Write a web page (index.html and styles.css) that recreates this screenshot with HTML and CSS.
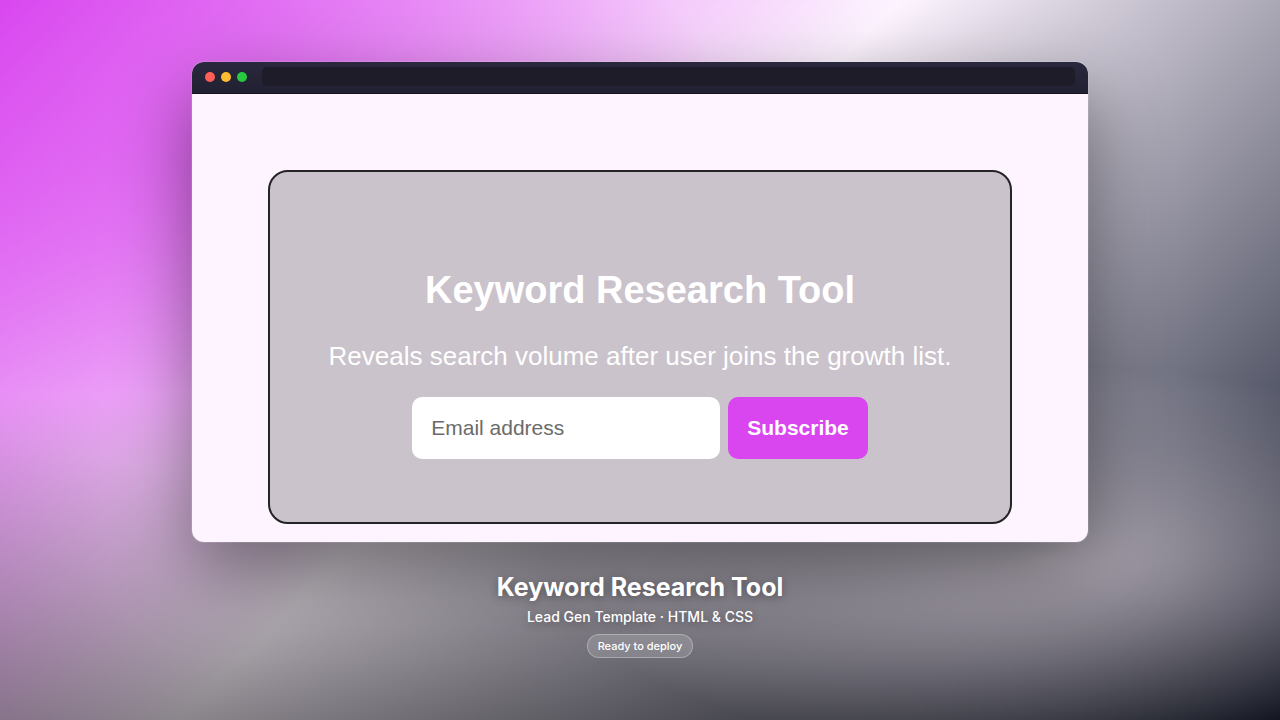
FILE: index.html
```
<!DOCTYPE html>
<html lang="en">
<head>
<meta charset="utf-8">
<meta name="viewport" content="width=device-width, initial-scale=1">
<title>Keyword Research Tool</title>
<link rel="stylesheet" href="styles.css">
</head>
<body>
<main class="stage">
  <section class="browser">
    <header class="browser-bar">
      <span class="dot dot-red"></span>
      <span class="dot dot-yellow"></span>
      <span class="dot dot-green"></span>
      <span class="address"></span>
    </header>
    <div class="page">
      <form class="card">
        <h1 class="card-title">Keyword Research Tool</h1>
        <p class="card-text">Reveals search volume after user joins the growth list.</p>
        <div class="fields">
          <input class="email" type="email" placeholder="Email address" aria-label="Email address">
          <button class="subscribe" type="button">Subscribe</button>
        </div>
      </form>
    </div>
  </section>
  <footer class="caption">
    <h2 class="caption-title">Keyword Research Tool</h2>
    <p class="caption-text">Lead Gen Template · HTML &amp; CSS</p>
    <span class="pill">Ready to deploy</span>
  </footer>
</main>
</body>
</html>
```
FILE: styles.css
```
* {
  box-sizing: border-box;
}

body {
  margin: 0;
}

.stage {
  min-height: 100vh;
  display: flex;
  flex-direction: column;
  align-items: center;
  justify-content: center;
  background:
    radial-gradient(ellipse 500px 196px at 82% 78%, rgba(253, 240, 250, 0.58), transparent),
    linear-gradient(to top, rgba(0, 0, 0, 0.45), transparent 45%),
    radial-gradient(ellipse 500px 300px at 20% 24%, rgba(217, 70, 239, 0.5), transparent),
    linear-gradient(135deg, #d946ef 0%, #fdf4ff 45%, #0f172a 100%);
}

.browser {
  width: 70%;
  border-radius: 12px;
  overflow: hidden;
  background: #fdf4ff;
  box-shadow:
    0 0 0 1px rgba(255, 255, 255, 0.12),
    0 30px 76px rgba(0, 0, 0, 0.45);
}

.browser-bar {
  display: flex;
  align-items: center;
  gap: 6px;
  padding: 5px 13px 7px;
  background: linear-gradient(#29283d, #222132);
  border-bottom: 1px solid #14131f;
}

.dot {
  width: 10px;
  height: 10px;
  border-radius: 50%;
}

.dot-red {
  background: #ff5f57;
}

.dot-yellow {
  background: #febc2e;
}

.dot-green {
  background: #28c840;
}

.address {
  flex: 1;
  height: 19px;
  margin-left: 9px;
  border-radius: 5px;
  background: #1d1c28;
}

.page {
  padding: 76px 76px 18px;
  font-family: "Liberation Sans", Arial, sans-serif;
}

.card {
  padding: 96px 48px 63px;
  border: 2px solid #242326;
  border-radius: 20px;
  background: #cac3cb;
  text-align: center;
  color: #fff;
}

.card-title {
  margin: 0 0 29px;
  font-size: 38px;
  line-height: 44px;
}

.card-text {
  margin: 0 0 26px;
  font-size: 26px;
  line-height: 30px;
}

.fields {
  display: flex;
  justify-content: center;
  gap: 8px;
}

.email,
.subscribe {
  height: 62px;
  padding: 0 19px;
  border: 0;
  border-radius: 10px;
  font-family: inherit;
  font-size: 21px;
}

.email {
  width: 308px;
  background: #fff;
}

.email::placeholder {
  color: #6b6b6b;
}

.subscribe {
  background: #d946ef;
  color: #fff;
  font-weight: 700;
}

.caption {
  display: flex;
  flex-direction: column;
  align-items: center;
  padding-top: 29px;
  font-family: Inter, sans-serif;
  color: #fff;
  text-shadow: 0 2px 8px rgba(0, 0, 0, 0.35);
}

.caption-title {
  margin: 0 0 5px;
  font-size: 25px;
  line-height: 32px;
  font-weight: 700;
}

.caption-text {
  margin: 0 0 8px;
  font-size: 14px;
  line-height: 18px;
  font-weight: 500;
}

.pill {
  padding: 4px 10px;
  border: 1px solid rgba(255, 255, 255, 0.3);
  border-radius: 12px;
  background: rgba(255, 255, 255, 0.16);
  font-size: 11px;
  line-height: 14px;
  font-weight: 500;
  text-shadow: none;
}
```
